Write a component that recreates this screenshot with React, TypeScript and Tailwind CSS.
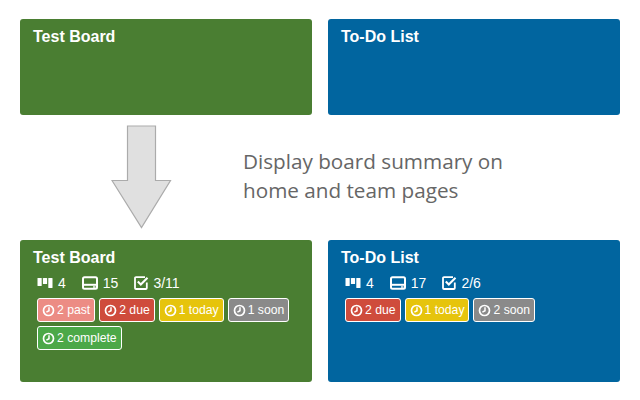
import React from "react";

const Clock = () => (
  <svg width="13" height="13" viewBox="0 0 13 13" className="shrink-0" fill="none" stroke="currentColor">
    <circle cx="6.5" cy="6.5" r="5" strokeWidth="1.7" />
    <path d="M7 3.2v3.5L4.4 8.1" strokeWidth="1.5" />
  </svg>
);

const BoardsIcon = () => (
  <svg width="16" height="12" viewBox="0 0 16 12" fill="currentColor" className="shrink-0">
    <rect x="0.5" y="1" width="4.2" height="8" rx="0.6" />
    <rect x="5.9" y="1" width="4.2" height="6" rx="0.6" />
    <rect x="11.3" y="1" width="4.2" height="10" rx="0.6" />
  </svg>
);

const CardsIcon = () => (
  <svg width="16" height="14" viewBox="0 0 16 14" className="shrink-0" fill="none" stroke="currentColor">
    <rect x="1" y="1.2" width="14" height="11.6" rx="1.5" strokeWidth="2" />
    <path d="M1 8.8h14" strokeWidth="2" />
    <path d="M11 11h2.5" strokeWidth="1.4" />
  </svg>
);

const CheckIcon = () => (
  <svg width="15" height="14" viewBox="0 0 15 14" className="-mr-px shrink-0" fill="none" stroke="currentColor">
    <path d="M12.8 6.5V12a1 1 0 0 1-1 1H2a1 1 0 0 1-1-1V2.2a1 1 0 0 1 1-1h9" strokeWidth="1.8" />
    <path d="M3.8 5.6l3 3 6.7-6.8" strokeWidth="2.1" />
  </svg>
);

const Badge = ({ label, bg }: { label: string; bg: string }) => (
  <span className={`flex h-6 items-center gap-[2px] rounded-[3px] border border-white px-1 text-[12.2px] text-white ${bg}`}>
    <Clock />
    {label}
  </span>
);

const Stat = ({ icon, value }: { icon: React.ReactNode; value: string }) => (
  <span className="flex items-center gap-[5px]">
    {icon}
    {value}
  </span>
);

const Card = ({ title, color, h, children }: { title: string; color: string; h: string; children?: React.ReactNode }) => (
  <div className={`w-[292px] rounded-[3px] pl-[13px] pt-[8px] text-white ${color} ${h}`}>
    <h2 className="text-base leading-5 font-bold">{title}</h2>
    {children}
  </div>
);

export default function App() {
  return (
    <div className="h-[400px] w-[640px] bg-white px-5 pt-[19px] font-['Liberation_Sans',Arial,sans-serif]">
      <div className="flex gap-4">
        <Card title="Test Board" color="bg-[#4a7e32]" h="h-[96px]" />
        <Card title="To-Do List" color="bg-[#01659f]" h="h-[96px]" />
      </div>

      <div className="flex h-[125px] items-start">
        <svg width="61" height="104" viewBox="0 0 61 104" className="ml-[91px] mt-[10px] shrink-0">
          <path d="M16.5 1H44.5V55.5H59.5L30.5 102.5L1 55.5H16.5Z" fill="#e0e0e0" stroke="#ababab" strokeWidth="1.2" />
        </svg>
        <p className="ml-[71px] mt-[32px] font-['Open_Sans',sans-serif] text-[20.7px] leading-[29px] text-[#666666]">
          Display board summary on
          <br />
          home and team pages
        </p>
      </div>

      <div className="flex gap-4">
        <Card title="Test Board" color="bg-[#4a7e32]" h="h-[142px]">
          <div className="mt-[4px] ml-[4px] flex h-[22px] items-center gap-[16px] text-sm">
            <Stat icon={<BoardsIcon />} value="4" />
            <Stat icon={<CardsIcon />} value="15" />
            <Stat icon={<CheckIcon />} value="3/11" />
          </div>
          <div className="mt-[4px] ml-[4px] flex w-[270px] flex-wrap gap-x-1 gap-y-1">
            <Badge label="2 past" bg="bg-[#ec8c84]" />
            <Badge label="2 due" bg="bg-[#cf4c3c]" />
            <Badge label="1 today" bg="bg-[#e6c40c]" />
            <Badge label="1 soon" bg="bg-[#8a8a8a]" />
            <Badge label="2 complete" bg="bg-[#4ca848]" />
          </div>
        </Card>
        <Card title="To-Do List" color="bg-[#01659f]" h="h-[142px]">
          <div className="mt-[4px] ml-[4px] flex h-[22px] items-center gap-[16px] text-sm">
            <Stat icon={<BoardsIcon />} value="4" />
            <Stat icon={<CardsIcon />} value="17" />
            <Stat icon={<CheckIcon />} value="2/6" />
          </div>
          <div className="mt-[4px] ml-[4px] flex w-[270px] flex-wrap gap-x-1 gap-y-1">
            <Badge label="2 due" bg="bg-[#cf4c3c]" />
            <Badge label="1 today" bg="bg-[#e6c40c]" />
            <Badge label="2 soon" bg="bg-[#8a8a8a]" />
          </div>
        </Card>
      </div>
    </div>
  );
}
